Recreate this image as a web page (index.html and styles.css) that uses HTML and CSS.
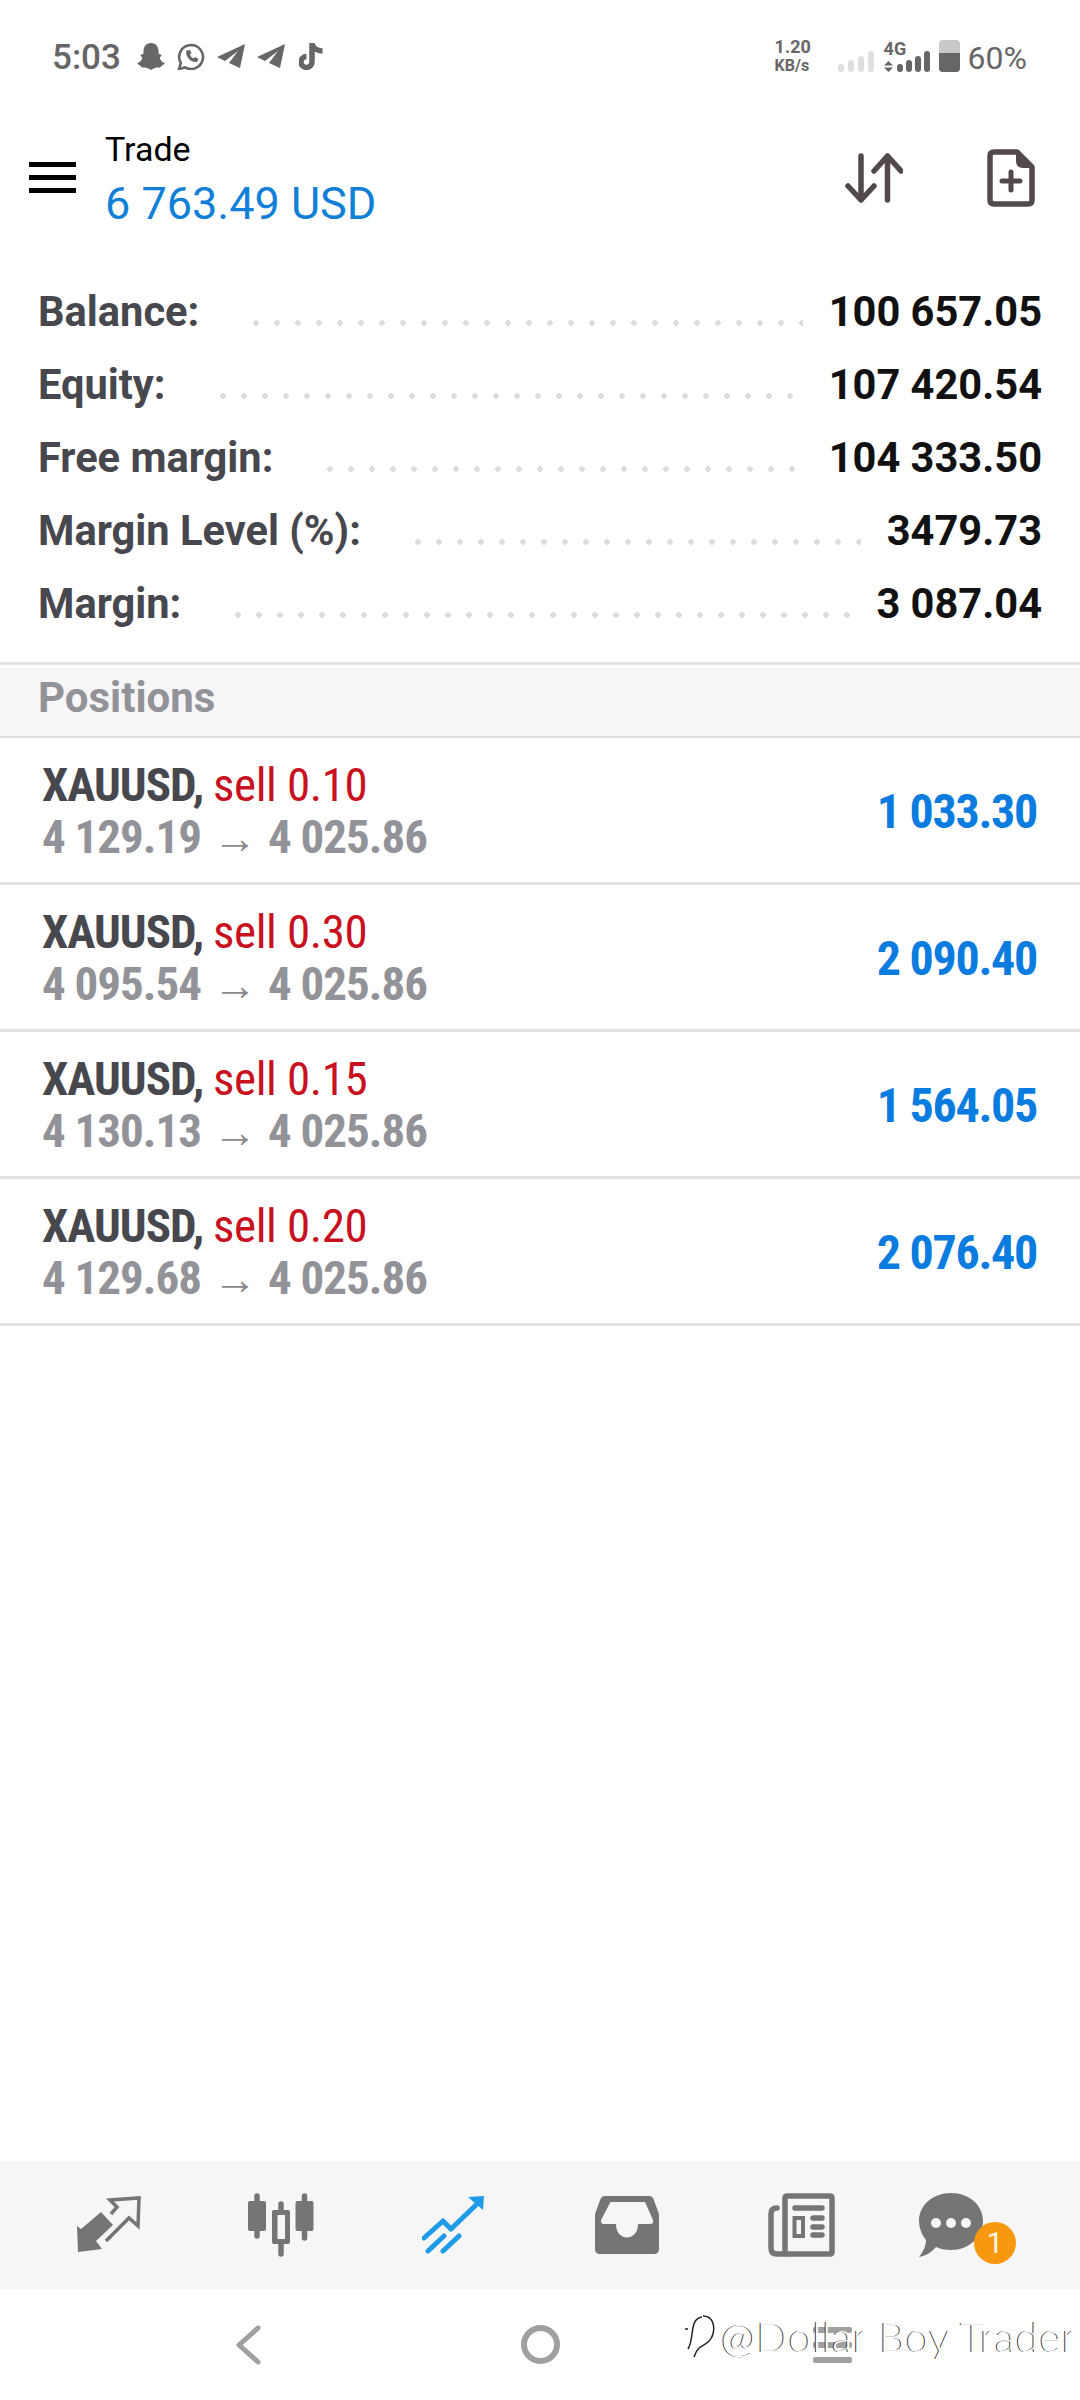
FILE: index.html
```html
<!DOCTYPE html>
<html lang="en">
<head>
  <meta charset="UTF-8" />
  <meta name="viewport" content="width=device-width, initial-scale=1.0"/>
  <title>Trade</title>
  <link rel="stylesheet" href="styles.css">
</head>
<body>

<div class="status">
  <span class="time">5:03</span>
  <div class="status-apps">
    <svg width="28" height="27" viewBox="0 0 26 25"><path class="fill-status" d="M13 0C18 0 20 4 20 8V10L23 11L21 14C22 17 24 18 26 19L23 21L21 23C18 22 16 23 13 25C10 23 8 22 5 23L3 21L0 19C2 18 4 17 5 14L3 11L6 10V8C6 4 8 0 13 0Z"/></svg>
    <svg width="28" height="27" viewBox="0 0 28 27"><path fill="none" stroke="#666" stroke-width="2.6" d="M14 2a12 12 0 1 1-6 22.4L2 26l1.8-6A12 12 0 0 1 14 2z"/><path class="fill-status" d="M9.500 7.500c-2 5 4 12.500 10.500 11.500l1.500-3-3.500-2-1.500 1.500c-2-1-3-2.500-3.500-4l1.500-1.500-1.500-3z"/></svg>
    <svg width="28" height="24" viewBox="0 0 28 24"><path class="fill-status" d="M28 0L0 13L8 17L21 7L12 19L23 24Z"/></svg>
    <svg width="28" height="24" viewBox="0 0 28 24"><path class="fill-status" d="M28 0L0 13L8 17L21 7L12 19L23 24Z"/></svg>
    <svg class="tiktok" width="24" height="28" viewBox="0 0 24 28"><path fill="none" stroke="#666" stroke-width="5.500" d="M13 1V20a5.500 5.500 0 1 1-5.500-5.500M13 2C14 6 18 9 23.500 9"/></svg>
  </div>
  <div class="status-right">
    <div class="speed"><span>1.20</span><span class="speed-unit">KB/s</span></div>
    <div class="bars bars-off"><i class="b1"></i><i class="b2"></i><i class="b3"></i><i class="b4"></i></div>
    <div class="net">
      <span class="net-label">4G</span>
      <div class="net-row">
        <svg width="9" height="11" viewBox="0 0 9 11"><path class="fill-status" d="M4.500 0L9 4.500H0ZM0 6.500H9L4.500 11Z"/></svg>
        <div class="bars"><i class="b1"></i><i class="b2"></i><i class="b3"></i><i class="b4"></i></div>
      </div>
    </div>
    <div class="battery"><div class="battery-level"></div></div>
    <span class="percent">60%</span>
  </div>
</div>

<div class="topbar">
  <div class="menu-icon"><i></i><i></i><i></i></div>
  <div class="title">
    <div class="title-name">Trade</div>
    <div class="title-value">6 763.49 USD</div>
  </div>
  <div class="top-actions">
    <svg width="58" height="50" viewBox="0 0 58 50"><path fill="none" stroke="#524a4a" stroke-width="5.500" stroke-linecap="round" stroke-linejoin="round" d="M16 3V47M3 33L16 47L29 33M42.500 47V3M29 18L42.500 3L56 18"/></svg>
    <svg width="48" height="58" viewBox="0 0 48 58"><path fill="none" stroke="#524a4a" stroke-width="5.500" stroke-linejoin="round" d="M7 3H30L45 18V51Q45 55 41 55H7Q3 55 3 51V7Q3 3 7 3Z"/><path fill="#524a4a" d="M29 2L46 19H36Q29 19 29 12Z"/><path stroke="#524a4a" stroke-width="5" stroke-linecap="round" d="M24 23V41M15 32H33"/></svg>
  </div>
</div>

<div class="summary">
  <div class="sum-row"><span class="sum-label">Balance:</span><span class="dots"></span><span class="sum-value">100 657.05</span></div>
  <div class="sum-row"><span class="sum-label">Equity:</span><span class="dots"></span><span class="sum-value">107 420.54</span></div>
  <div class="sum-row"><span class="sum-label">Free margin:</span><span class="dots"></span><span class="sum-value">104 333.50</span></div>
  <div class="sum-row"><span class="sum-label">Margin Level (%):</span><span class="dots"></span><span class="sum-value">3479.73</span></div>
  <div class="sum-row"><span class="sum-label">Margin:</span><span class="dots"></span><span class="sum-value">3 087.04</span></div>
</div>

<div class="section-head">Positions</div>

<div class="pos-row">
  <div>
    <div class="pos-line"><b class="pos-symbol">XAUUSD,</b> <span class="pos-sell">sell 0.10</span></div>
    <div class="pos-line pos-prices">4 129.19<span class="pos-arrow">→</span>4 025.86</div>
  </div>
  <div class="pos-profit">1 033.30</div>
</div>
<div class="pos-row">
  <div>
    <div class="pos-line"><b class="pos-symbol">XAUUSD,</b> <span class="pos-sell">sell 0.30</span></div>
    <div class="pos-line pos-prices">4 095.54<span class="pos-arrow">→</span>4 025.86</div>
  </div>
  <div class="pos-profit">2 090.40</div>
</div>
<div class="pos-row">
  <div>
    <div class="pos-line"><b class="pos-symbol">XAUUSD,</b> <span class="pos-sell">sell 0.15</span></div>
    <div class="pos-line pos-prices">4 130.13<span class="pos-arrow">→</span>4 025.86</div>
  </div>
  <div class="pos-profit">1 564.05</div>
</div>
<div class="pos-row">
  <div>
    <div class="pos-line"><b class="pos-symbol">XAUUSD,</b> <span class="pos-sell">sell 0.20</span></div>
    <div class="pos-line pos-prices">4 129.68<span class="pos-arrow">→</span>4 025.86</div>
  </div>
  <div class="pos-profit">2 076.40</div>
</div>

<div class="spacer"></div>

<div class="tabs">
  <div class="tab">
    <svg width="66" height="58" viewBox="14 12 66 58"><path fill="#757575" d="M16 42L20 45L40 28L52 41L35 57L41 65L17 68Z"/><path fill="none" stroke="#757575" stroke-width="3.500" d="M50 30L56 23L49 16L78 14L77 42L68 34L45 57"/></svg>
  </div>
  <div class="tab">
    <svg width="66" height="64" viewBox="0 0 66 64"><path stroke="#757575" stroke-width="5.500" stroke-linecap="round" d="M9 3V43M33 11V61M56.500 3V45"/><rect fill="#757575" x="0" y="8" width="18" height="30" rx="2"/><rect fill="#757575" x="24" y="17" width="18" height="34" rx="2"/><rect fill="#f6f6f6" x="29.500" y="22" width="7.500" height="24"/><rect fill="#757575" x="47.500" y="8" width="18" height="30" rx="2"/></svg>
  </div>
  <div class="tab tab-trend">
    <svg width="66" height="60" viewBox="12 9 66 60"><path fill="none" stroke="#1e9be8" stroke-width="5" stroke-linecap="round" stroke-linejoin="round" d="M14 52L33 35L41 43L68 17M18 65L34 50M33 65L49 50"/><path fill="#1e9be8" d="M58 11L74 10L73 24Z"/></svg>
  </div>
  <div class="tab">
    <svg width="64" height="58" viewBox="0 0 64 58"><path fill="#757575" fill-rule="evenodd" d="M10 0H54Q57 0 58.500 3L64 18V53Q64 58 59 58H5Q0 58 0 53V18L5.500 3Q7 0 10 0ZM15.500 6L6 24Q5.500 28 9 28H21C21 46 43 46 43 28H55Q59 28 58 24L50 6Z"/></svg>
  </div>
  <div class="tab tab-news">
    <svg width="67" height="64" viewBox="0 0 67 64"><path fill="none" stroke="#757575" stroke-width="5.500" stroke-linejoin="round" d="M19 61H62Q64 61 64 59V5Q64 3 62 3H19Q17 3 17 5V61"/><path fill="none" stroke="#757575" stroke-width="5.500" stroke-linecap="round" d="M9 15Q3 15 3 21V55Q3 61 9 61H19M27 15H54M45 25H54M45 34H54M45 42H54"/><rect fill="none" stroke="#757575" stroke-width="4" x="26.500" y="25" width="8.500" height="18"/></svg>
  </div>
  <div class="tab tab-chat">
    <svg width="64" height="64" viewBox="0 0 64 64"><path fill="#757575" d="M32 0C50 0 64 12 64 28C64 44 50 57 32 57C26 57 21 56 17 54C12 60 6 63 0 64C4 59 7 53 7 47C3 42 0 35 0 28C0 12 14 0 32 0Z"/><circle fill="#f6f6f6" cx="17" cy="30" r="5"/><circle fill="#f6f6f6" cx="32" cy="30" r="5"/><circle fill="#f6f6f6" cx="47" cy="30" r="5"/></svg>
    <span class="badge">1</span>
  </div>
</div>

<div class="sysnav">
  <svg width="27" height="40" viewBox="0 0 27 40"><path fill="none" stroke="#a0a0a0" stroke-width="5" stroke-linecap="round" stroke-linejoin="round" d="M23 3L4 20L23 37"/></svg>
  <div class="home-btn"></div>
  <div class="recent-btn"><i></i><i></i><i></i></div>
</div>

<div class="watermark">
  <svg width="30" height="44" viewBox="0 0 30 44"><path fill="none" stroke="#222" stroke-width="1.500" d="M17 3C9 4 8 12 7 20C6 28 5 32 3 35M0 15H3M18 2C28 2 30 12 28 20C26 28 20 30 14 34C11 37 10 40 9 43"/></svg>
  <span>@Dollar Boy Trader</span>
</div>

</body>
</html>
```

FILE: styles.css
```css
* {
  box-sizing: border-box;
}

body {
  position: relative;
  display: flex;
  flex-direction: column;
  width: 1080px;
  height: 2400px;
  margin: 0;
  overflow: hidden;
  background: #fff;
  font-family: Roboto, "Liberation Sans", sans-serif;
  color: #47484e;
}

.fill-status {
  fill: #666;
}

/* status bar */
.status {
  display: flex;
  align-items: center;
  height: 112px;
  padding: 0 53px 0 52px;
  color: #666;
}

.time {
  margin-top: 2px;
  font-size: 35px;
  font-weight: 500;
}

.status-apps {
  display: flex;
  align-items: center;
  gap: 12px;
  margin-left: 16px;
}

.tiktok {
  margin-left: 2px;
}

.status-right {
  display: flex;
  align-items: flex-end;
  margin-left: auto;
  height: 32px;
}

.speed {
  display: flex;
  flex-direction: column;
  width: 63px;
  margin-bottom: -3px;
  font-size: 18px;
  font-weight: 700;
  line-height: 18px;
}

.speed-unit {
  margin-top: 1px;
  font-size: 16px;
}

.bars {
  display: flex;
  align-items: flex-end;
  gap: 3px;
  height: 21px;
}

.bars i {
  display: block;
  width: 6px;
  background: #666;
  border-radius: 3px;
}

.bars-off {
  gap: 4px;
}

.bars-off i {
  background: #e0e0e0;
}

.b1 { height: 8px; }
.b2 { height: 12px; }
.b3 { height: 16px; }
.b4 { height: 21px; }

.net {
  display: flex;
  flex-direction: column;
  margin-left: 10px;
}

.net-label {
  font-size: 18px;
  font-weight: 700;
  line-height: 13px;
  margin-bottom: -4px;
}

.net-row {
  display: flex;
  align-items: flex-end;
  gap: 4px;
}

.battery {
  width: 21px;
  height: 32px;
  margin-left: 9px;
  padding-top: 13px;
  background: #c8c8c8;
  border-radius: 4px;
  overflow: hidden;
}

.battery-level {
  height: 100%;
  background: #666;
}

.percent {
  margin-left: 8px;
  font-size: 32px;
  line-height: 32px;
  margin-bottom: -2px;
}

/* header */
.topbar {
  display: flex;
  align-items: center;
  height: 103px;
  margin: 14px 0 46px;
  padding: 0 45px 0 29px;
}

.menu-icon {
  display: flex;
  flex-direction: column;
  gap: 8px;
  width: 47px;
}

.menu-icon i {
  display: block;
  height: 5px;
  background: #000;
}

.title {
  margin: 0 0 4px 29px;
}

.title-name {
  font-size: 34px;
  line-height: 57px;
  color: #000;
}

.title-value {
  font-size: 45px;
  line-height: 52px;
  color: #0f7fd8;
}

.top-actions {
  display: flex;
  align-items: center;
  gap: 84px;
  margin-left: auto;
}

/* account summary */
.summary {
  padding: 0 38px;
  margin-bottom: 22px;
}

.sum-row {
  display: flex;
  align-items: baseline;
  font-size: 41.600px;
  font-weight: 700;
  line-height: 73px;
}

.dots {
  flex: 1;
  height: 6px;
  margin: 0 26px 0 54px;
  background: radial-gradient(circle at 3px 3px, #dcdcdc 2.600px, transparent 3px) 0 0 / 21px 6px repeat-x;
}

.sum-value {
  color: #111;
}

/* positions */
.section-head {
  display: flex;
  align-items: center;
  height: 76px;
  padding: 0 38px 6px;
  border-top: 3px solid #e4e4e4;
  border-bottom: 2px solid #e0e0e0;
  background: linear-gradient(#fff 3px, #f6f6f6 3px);
  font-size: 42px;
  font-weight: 700;
  color: #929398;
}

.pos-row {
  display: flex;
  align-items: center;
  justify-content: space-between;
  height: 147px;
  padding: 1px 43px 0 42px;
  border-bottom: 3px solid #e2e2e2;
}

.pos-line {
  font-size: 47px;
  font-stretch: 75%;
  letter-spacing: -1px;
  line-height: 52px;
  white-space: nowrap;
}

.pos-symbol {
  font-weight: 700;
  color: #47484e;
}

.pos-sell {
  color: #c8101e;
  letter-spacing: -0.4px;
}

.pos-prices {
  font-weight: 700;
  color: #929398;
}

.pos-arrow {
  margin: 0 12px;
  font-family: "Liberation Sans", sans-serif;
  font-size: 44px;
  font-stretch: normal;
  font-weight: 400;
  line-height: 0;
  color: #8a8a8a;
}

.pos-profit {
  margin-top: 1px;
  font-size: 48px;
  font-stretch: 75%;
  font-weight: 700;
  letter-spacing: -1.300px;
  color: #0a7ce0;
}

.spacer {
  flex: 1;
}

/* bottom tabs */
.tabs {
  display: grid;
  grid-template-columns: repeat(6, 173px);
  align-items: center;
  height: 128px;
  padding: 0 0 0 21px;
  background: #f6f6f6;
}

.tab {
  display: flex;
  justify-content: center;
}

.tab-trend {
  padding-left: 2px;
}

.tab-news {
  padding-left: 4px;
}

.tab-chat {
  position: relative;
  padding-right: 43px;
}

.badge {
  position: absolute;
  left: 88px;
  top: 29px;
  width: 42px;
  height: 42px;
  border-radius: 50%;
  background: #f7980f;
  color: #fff6e0;
  font-size: 30px;
  line-height: 42px;
  text-align: center;
}

/* system nav */
.sysnav {
  display: grid;
  grid-template-columns: repeat(3, 292px);
  justify-items: center;
  align-items: center;
  height: 111px;
  padding: 0 102px 0;
}

.home-btn {
  width: 39px;
  height: 39px;
  border: 6px solid #a0a0a0;
  border-radius: 50%;
}

.recent-btn {
  display: flex;
  flex-direction: column;
  gap: 9px;
  width: 39px;
}

.recent-btn i {
  display: block;
  height: 6px;
  background: #a0a0a0;
  border-radius: 2px;
}

.watermark {
  position: absolute;
  left: 685px;
  top: 2311px;
  display: flex;
  align-items: center;
  gap: 6px;
  font-family: Lato, Roboto, sans-serif;
  font-size: 42px;
  font-weight: 300;
  letter-spacing: 0.500px;
  color: #fff;
  text-shadow: -1px 0 0 #333;
  white-space: nowrap;
}
```
